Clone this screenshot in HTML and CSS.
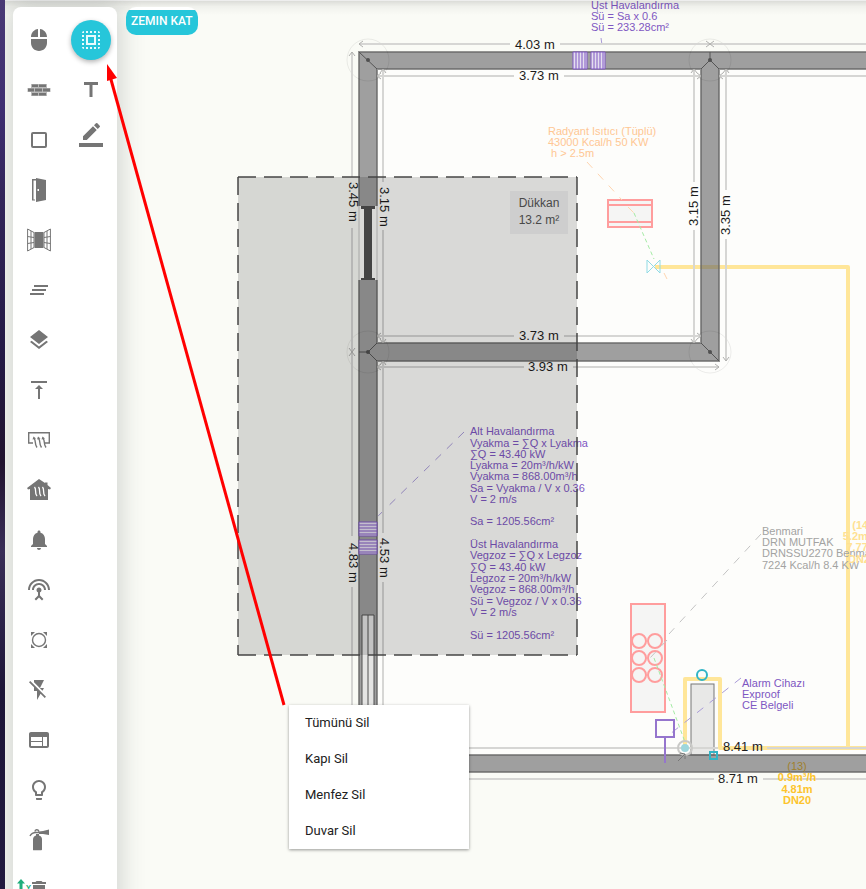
FILE: index.html
```html
<!DOCTYPE html>
<html lang="tr">
<head>
<meta charset="utf-8">
<meta name="viewport" content="width=device-width, initial-scale=1">
<title>Zemin Kat</title>
<link rel="stylesheet" href="styles.css">
</head>
<body>
<div class="app">
  <div class="backdrop"></div>
  <main class="workspace">
    <svg class="plan" role="img" aria-label="Zemin kat planı">
      <defs>
        <marker id="tip" class="tip" viewBox="0 0 8 8" refX="7" refY="4" markerWidth="8" markerHeight="8" markerUnits="userSpaceOnUse" orient="auto-start-reverse">
          <path d="M3 1 7 4 3 7"/>
        </marker>
      </defs>

      <!-- floor -->
      <path class="floor" d="M355 52H2000V772H355Z"/>

      <!-- gas pipes -->
      <g class="pipe">
        <path d="M650 267H843V748"/>
        <path d="M680 748V679H715V748H2000"/>
      </g>

      <!-- appliances -->
      <g class="appliance">
        <rect x="603" y="200" width="44" height="27"/>
        <path d="M603 205h44M603 222h44"/>
        <rect x="626" y="604" width="34" height="108"/>
        <circle cx="634" cy="641" r="7"/><circle cx="650" cy="641" r="7"/>
        <circle cx="634" cy="658" r="7"/><circle cx="650" cy="658" r="7"/>
        <circle cx="634" cy="675" r="7"/><circle cx="650" cy="675" r="7"/>
      </g>
      <path class="flex-line" d="M629 213 649 259M649 658 680 742"/>
      <path class="valve" d="M642 260V273L655 260V273Z"/>
      <path class="leader leader-orange" d="M582 162 617 200M623 207 629 213M659 273 662 279"/>
      <path class="leader leader-gray" d="M756 534 664 634M662 640 645 658"/>

      <!-- flue shaft -->
      <rect class="shaft" x="686" y="684" width="23" height="71"/>

      <!-- walls -->
      <path class="wall" d="M354 52H2000V69H714V361H372V755H2000V772H354V280H372V343H696V69H372V206H354Z"/>
      <path class="wall-edge" d="M354 206V52H2000M2000 69H714V361H372V755H2000M2000 772H354V280M372 280V343H696V69H372V206"/>
      <path class="miter" d="M354 52 372 69M696 69 705 60 714 69M705 52V60M372 343 363 352 372 361M354 352H363M696 343 714 361"/>
      <g class="node">
        <circle cx="363" cy="60" r="2"/><circle cx="705" cy="60" r="2"/>
        <circle cx="363" cy="352" r="2"/><circle cx="705" cy="352" r="2"/>
      </g>
      <g class="halo">
        <circle cx="363" cy="60" r="21"/><circle cx="705" cy="60" r="21"/>
        <circle cx="363" cy="352" r="21"/><circle cx="705" cy="352" r="21"/>
      </g>

      <!-- door and window openings -->
      <path class="door-jamb" d="M354 206V280M372 206V280"/>
      <path class="door-leaf" d="M356 206H370V209H367V278H370V280H356V278H359V209H356Z"/>
      <path class="pane" d="M357 615H369V755H357Z"/>
      <path class="mullion" d="M357 755V615H369V755M363 615V755"/>

      <!-- vents -->
      <g class="vent">
        <path class="vent-back" d="M568 52h14v17h-14zM586 52h14v17h-14zM354 522h18v14h-18zM354 540h18v14h-18z"/>
        <path d="M571 52v17M574 52v17M577 52v17M580 52v17M589 52v17M592 52v17M595 52v17M598 52v17M354 525h18M354 528h18M354 531h18M354 534h18M354 543h18M354 546h18M354 549h18M354 552h18"/>
      </g>
      <path class="leader leader-purple" d="M459 432 368 521M592 8 593 14M596 38 597 45M736 678 660 738"/>

      <!-- dimension lines -->
      <g class="dim-head">
        <path d="M505 44H354"/><path d="M555 44H705"/><path d="M866 44H705"/>
        <path d="M509 76H372"/><path d="M559 76H696"/><path d="M866 76H714"/>
        <path d="M347 177V52"/><path d="M347 228V352"/><path d="M347 536V352"/>
        <path d="M378 182V69"/><path d="M378 230V343"/><path d="M378 533V361"/>
        <path d="M689 182V69"/><path d="M689 230V343"/>
        <path d="M721 190V69"/><path d="M721 239V361"/>
        <path d="M509 336H372"/><path d="M559 336H696"/>
        <path d="M519 367H372"/><path d="M568 367H714"/>
      </g>
      <path class="dim-line" d="M347 587V779M378 582V748M378 748H713M762 748H2000M349 779H709M758 779H2000"/>
      <g class="dim-text">
        <text x="510" y="49">4.03 m</text>
        <text x="514" y="80">3.73 m</text>
        <text x="514" y="340">3.73 m</text>
        <text x="523" y="371">3.93 m</text>
        <text x="718" y="751">8.41 m</text>
        <text x="713" y="783">8.71 m</text>
        <text transform="translate(344 182) rotate(90)">3.45 m</text>
        <text transform="translate(375 187) rotate(90)">3.15 m</text>
        <text transform="translate(344 543) rotate(90)">4.83 m</text>
        <text transform="translate(375 538) rotate(90)">4.53 m</text>
        <text transform="translate(693 226) rotate(-90)">3.15 m</text>
        <text transform="translate(725 235) rotate(-90)">3.35 m</text>
      </g>

      <!-- gas detector, fittings -->
      <path class="detector" d="M651 720h18v17h-18zM660 737v26"/>
      <circle class="riser-ring" cx="680" cy="748" r="7"/>
      <circle class="riser" cx="680" cy="748" r="4"/>
      <path class="riser-arrow" d="M673 761 680 754M675 753 680 754 680 759"/>
      <circle class="fitting" cx="697" cy="675" r="5"/>
      <rect class="fitting" x="705" y="752" width="7" height="7"/>

      <!-- notes -->
      <g class="note note-purple">
        <text x="586" y="9">Üst Havalandırma</text>
        <text x="586" y="20">Sü = Sa x 0.6</text>
        <text x="586" y="31">Sü = 233.28cm²</text>
        <text x="465" y="435">Alt Havalandırma</text>
        <text x="465" y="447">Vyakma = ∑Q x Lyakma</text>
        <text x="465" y="458">∑Q = 43.40 kW</text>
        <text x="465" y="469">Lyakma = 20m³/h/kW</text>
        <text x="465" y="480">Vyakma = 868.00m³/h</text>
        <text x="465" y="492">Sa = Vyakma / V x 0.36</text>
        <text x="465" y="503">V = 2 m/s</text>
        <text x="465" y="525">Sa = 1205.56cm²</text>
        <text x="465" y="548">Üst Havalandırma</text>
        <text x="465" y="559">Vegzoz = ∑Q x Legzoz</text>
        <text x="465" y="571">∑Q = 43.40 kW</text>
        <text x="465" y="582">Legzoz = 20m³/h/kW</text>
        <text x="465" y="593">Vegzoz = 868.00m³/h</text>
        <text x="465" y="605">Sü = Vegzoz / V x 0.36</text>
        <text x="465" y="616">V = 2 m/s</text>
        <text x="465" y="639">Sü = 1205.56cm²</text>
        <text x="737" y="687">Alarm Cihazı</text>
        <text x="737" y="698">Exproof</text>
        <text x="737" y="709">CE Belgeli</text>
      </g>
      <g class="note note-orange">
        <text x="543" y="135">Radyant Isıtıcı (Tüplü)</text>
        <text x="543" y="146">43000 Kcal/h 50 KW</text>
        <text x="546" y="157">h &gt; 2.5m</text>
      </g>
      <g class="note note-gray">
        <text x="757" y="535">Benmari</text>
        <text x="757" y="546">DRN MUTFAK</text>
        <text x="757" y="557">DRNSSU2270 Benmari</text>
        <text x="757" y="569">7224 Kcal/h 8.4 KW</text>
      </g>
      <g class="note note-pale">
        <text x="857" y="529">(14)</text>
        <text x="857" y="540">5.2m³/h</text>
        <text x="857" y="551">7.77m</text>
        <text x="857" y="563">DN20</text>
      </g>
      <g class="note note-gold">
        <text class="note-shaded" x="792" y="770">(13)</text>
        <text x="792" y="781">0.9m³/h</text>
        <text x="792" y="793">4.81m</text>
        <text x="792" y="804">DN20</text>
      </g>

      <!-- selection marquee -->
      <path class="marquee" d="M233 177H572V655H233Z"/>
      <path class="marquee-edge" d="M233 177H572M233 655H572"/>
      <path class="marquee-edge" d="M233 177V655M572 177V655"/>

      <!-- room tag -->
      <rect class="tag" x="505" y="191" width="58" height="43"/>
      <g class="tag-text">
        <text x="534" y="207">Dükkan</text>
        <text x="534" y="224">13.2 m²</text>
      </g>
    </svg>

    <div class="overlay">
      <div class="toolbar" role="toolbar" aria-label="Çizim araçları">
        <div class="tools">
          <button class="tool" aria-label="Seç"><svg viewBox="0 0 24 24"><path d="M13 1.070V9h7c0-4.080-3.050-7.440-7-7.930zM4 15c0 4.420 3.580 8 8 8s8-3.580 8-8v-4H4v4zm7-13.930C7.050 1.560 4 4.920 4 9h7V1.070z"/></svg></button>
          <button class="tool" aria-label="Duvar"><svg viewBox="0 0 24 24"><path opacity=".5" d="M4 6h16v4h3.500v4H20v4H4v-4H.5v-4H4z"/><path d="M5 6.500h6v2.500H5zM12 6.500h7v2.500h-7zM1 10.500h6v3H1zM8 10.500h7v3H8zM16 10.500h7v3h-7zM5 15h6v2.500H5zM12 15h7v2.500h-7z"/></svg></button>
          <button class="tool" aria-label="Oda"><svg viewBox="0 0 24 24"><rect class="line heavy" x="5" y="5" width="14" height="14" rx="1"/></svg></button>
          <button class="tool" aria-label="Kapı"><svg viewBox="0 0 24 24"><path fill-rule="evenodd" d="M9 0l10 2v20L9 24zM10.500 11v2h1.500v-2zM5 1h4v1.500H6.500V21.500H8V22.500H5z"/></svg></button>
          <button class="tool" aria-label="Pencere"><svg viewBox="0 0 24 24"><path d="M7.500 4h9v16h-9z"/><path class="line" d="M.6 1 7 4.500V19.500L.6 23zM23.400 1 17 4.500V19.500L23.400 23zM4 3V21M20 3V21M.6 8.500 7 9.500M.6 15.500 7 14.500M23.400 8.500 17 9.500M23.400 15.500 17 14.500"/></svg></button>
          <button class="tool" aria-label="Hatlar"><svg viewBox="0 0 24 24"><path d="M5 13h14v-2H5v2zm-2 4h14v-2H3v2zM7 7v2h14V7H7z"/></svg></button>
          <button class="tool" aria-label="Katmanlar"><svg viewBox="0 0 24 24"><path d="M11.990 18.540l-7.370-5.730L3 14.070l9 7 9-7-1.630-1.270-7.380 5.740zM12 16l7.360-5.730L21 9l-9-7-9 7 1.630 1.270L12 16z"/></svg></button>
          <button class="tool" aria-label="Üste hizala"><svg viewBox="0 0 24 24"><path d="M8 11h3v10h2V11h3l-4-4-4 4zM4 3v2h16V3H4z"/></svg></button>
          <button class="tool" aria-label="Menfez"><svg viewBox="0 0 24 24"><path class="line bold" d="M6 15H1.700V4.700H22.300V15H18"/><path class="line bold" d="M7 10.500c2.500 2.500 0 5 3 9M11.500 10.500c2.500 2.500 0 5 3 9M16 10.500c2.500 2.500 0 5 3 9"/><path d="M5.500 11.500 6.500 8.500l2.500 2zM10 11.500l1-3 2.500 2zM14.500 11.500l1-3 2.500 2z"/></svg></button>
          <button class="tool" aria-label="Isıtma"><svg viewBox="0 0 24 24"><path d="M12 1l6 4V4.500h2.500V7L24 10l-1 1.500-2-.5v11H3V11l-2 .5L0 10z"/><path class="cut" d="M7.500 9c2.500 3-.5 5 2.500 9M11.500 9c2.500 3-.5 5 2.500 9M15.500 9c2.500 3-.5 5 2.500 9"/></svg></button>
          <button class="tool" aria-label="Alarm"><svg viewBox="0 0 24 24"><path d="M12 22c1.100 0 2-.9 2-2h-4c0 1.100.89 2 2 2zm6-6v-5c0-3.070-1.640-5.640-4.500-6.320V4c0-.83-.67-1.500-1.500-1.500s-1.500.67-1.500 1.500v.68C7.630 5.360 6 7.920 6 11v5l-2 2v1h16v-1l-2-2z"/></svg></button>
          <button class="tool" aria-label="Sensör"><svg viewBox="0 0 24 24"><path d="M12 5c-3.870 0-7 3.130-7 7h2c0-2.760 2.240-5 5-5s5 2.240 5 5h2c0-3.870-3.130-7-7-7zm1 9.290c.88-.39 1.500-1.260 1.500-2.290 0-1.380-1.120-2.500-2.500-2.500S9.500 10.620 9.500 12c0 1.020.62 1.900 1.500 2.290v3.300L7.590 21 9 22.410l3-3 3 3L16.410 21 13 17.590v-3.300zM12 1C5.930 1 1 5.930 1 12h2c0-4.970 4.030-9 9-9s9 4.030 9 9h2c0-6.070-4.930-11-11-11z"/></svg></button>
          <button class="tool" aria-label="Kolon"><svg viewBox="0 0 24 24"><circle class="line bold" cx="12" cy="12" r="6.500"/><path d="M4 4h4L4 8zM20 4v4L16 4zM4 20v-4L8 20zM20 20h-4l4-4z"/></svg></button>
          <button class="tool" aria-label="Elektrik"><svg viewBox="0 0 24 24"><path d="M3.270 3L2 4.270l5 5V13h3v9l3.580-6.140L17.730 20 19 18.730 3.270 3zM17 10h-4l4-8H7v2.180l8.460 8.460L17 10z"/></svg></button>
          <button class="tool" aria-label="Pafta"><svg viewBox="0 0 24 24"><path fill-rule="evenodd" d="M20 4H4c-1.100 0-2 .9-2 2v12c0 1.100.9 2 2 2h16c1.100 0 2-.9 2-2V6c0-1.100-.9-2-2-2zM15 18H4v-4h11zM15 13H4V9h11zM20 18h-4V9h4z"/></svg></button>
          <button class="tool" aria-label="Aydınlatma"><svg viewBox="0 0 24 24"><path d="M9 21c0 .55.45 1 1 1h4c.55 0 1-.45 1-1v-1H9v1zm3-19C8.140 2 5 5.140 5 9c0 2.380 1.190 4.470 3 5.740V17c0 .55.45 1 1 1h6c.55 0 1-.45 1-1v-2.260c1.810-1.270 3-3.360 3-5.740 0-3.860-3.140-7-7-7zm2.850 11.100l-.85.6V16h-4v-2.300l-.85-.6C7.800 12.160 7 10.630 7 9c0-2.760 2.240-5 5-5s5 2.240 5 5c0 1.630-.8 3.160-2.150 4.100z"/></svg></button>
          <button class="tool" aria-label="Yangın söndürücü"><svg viewBox="0 0 24 24"><path d="M6 22V11.500C6 9 7.500 8 9 7.500V6h3v1.500c2 .5 3 2 3 4V21.500c0 .5-.3.800-.8.800H6.800c-.5 0-.8-.3-.8-.3zM12 3.500 16 3l6-1.500v5.500L16 6H12z"/><path class="line bold" d="M3 8c1-2 3-3.500 6-3.500h3M8 3.500c0-2 3-2.500 4 0"/></svg></button>
          <button class="tool" aria-label="Sil"><svg viewBox="0 0 24 24"><path d="M6 19c0 1.100.9 2 2 2h8c1.100 0 2-.9 2-2V7H6v12zM19 4h-3.500l-1-1h-5l-1 1H5v2h14V4z"/></svg></button>
        </div>
        <div class="tools">
          <button class="tool tool-active" aria-label="Alan seç" aria-pressed="true"><svg viewBox="0 0 24 24"><path d="M3 5h2V3c-1.100 0-2 .9-2 2zm0 8h2v-2H3v2zm4 8h2v-2H7v2zM3 9h2V7H3v2zm10-6h-2v2h2V3zm6 0v2h2c0-1.100-.9-2-2-2zM5 21v-2H3c0 1.100.9 2 2 2zm-2-4h2v-2H3v2zM9 3H7v2h2V3zm2 18h2v-2h-2v2zm8-8h2v-2h-2v2zm0 8c1.100 0 2-.9 2-2h-2v2zm0-12h2V7h-2v2zm0 8h2v-2h-2v2zm-4 4h2v-2h-2v2zm0-16h2V3h-2v2zM7 17h10V7H7v10zm2-8h6v6H9V9z"/></svg></button>
          <button class="tool" aria-label="Metin"><svg viewBox="0 0 24 24"><path d="M5 4v3h5.500v12h3V7H19V4z"/></svg></button>
          <button class="tool" aria-label="Çizgi rengi"><svg viewBox="0 0 24 24"><path d="M17.750 2 14 -1.750l-10 10V12h3.750l10-10zm2.960-2.960a1 1 0 0 0 0-1.410L18.370-4.710a1 1 0 0 0-1.410 0L15-2.750 18.750 1l1.960-1.960zM0 15h24v4H0z"/></svg></button>
        </div>
      </div>
      <div class="floor-badge">ZEMIN KAT</div>
    </div>

    <svg class="axis" viewBox="0 0 20 10" aria-hidden="true">
      <path d="M0 4.500 4 0l4 4.500H5.500V10h-3V4.500z"/>
      <text x="9" y="11">Y</text>
    </svg>

    <svg class="callout" aria-hidden="true">
      <path class="callout-line" d="M279 705 105 76"/>
      <path class="callout-head" d="M102 64 112 78 102 81Z"/>
    </svg>

    <div class="menu" role="menu">
      <button class="menu-item" role="menuitem">Tümünü Sil</button>
      <button class="menu-item" role="menuitem">Kapı Sil</button>
      <button class="menu-item" role="menuitem">Menfez Sil</button>
      <button class="menu-item" role="menuitem">Duvar Sil</button>
    </div>
  </main>
</div>
</body>
</html>
```
FILE: styles.css
```css
* { box-sizing: border-box; }

body {
  margin: 0;
  font-family: Roboto, "Liberation Sans", sans-serif;
  overflow: hidden;
}

button {
  border: 0;
  padding: 0;
  background: none;
  font: inherit;
  color: inherit;
  cursor: pointer;
}

.app {
  display: grid;
  grid-template-columns: 5px 1fr;
  height: 100vh;
}

.backdrop {
  background: linear-gradient(#4a3a75 0%, #3f2f72 12%, #33265a 22%, #241a45 40%, #22142f 52%, #3a2f58 62%, #1d1638 78%, #221a3f 100%);
}

.workspace {
  position: relative;
  overflow: hidden;
  background: #fafbf6;
}

.workspace::after {
  content: "";
  position: absolute;
  inset: 0 0 auto;
  height: 14px;
  border-top: 1px solid #eeeeee;
  background: linear-gradient(rgba(0, 0, 0, 0.12), rgba(0, 0, 0, 0.04) 40%, transparent);
  pointer-events: none;
}

/* drawing */
.plan,
.callout {
  position: absolute;
  inset: 0;
  width: 100%;
  height: 100%;
  font-family: "Liberation Sans", Arial, sans-serif;
}

.callout { pointer-events: none; z-index: 3; }

.floor { fill: #fdfdfb; }

.pipe { fill: none; stroke: #ffe699; stroke-width: 4; stroke-linejoin: round; }

.appliance { fill: #f5f5f4; stroke: #ff9d9d; stroke-width: 2; }
.appliance circle { fill: none; }

.flex-line { fill: none; stroke: #a5eba5; stroke-dasharray: 4 3; }
.valve { fill: none; stroke: #8fdbe5; stroke-width: 1; }

.leader { fill: none; stroke-width: 1; stroke-dasharray: 8 8; }
.leader-orange { stroke: #ffd5b0; }
.leader-gray { stroke: #c4c4c4; }
.leader-purple { stroke: #a99bd8; }

.shaft { fill: #e8e8e7; stroke: #777777; stroke-width: 1; }

.wall { fill: #666666; fill-opacity: 0.62; }
.wall-edge { fill: none; stroke: #666666; stroke-width: 2; stroke-opacity: 0.7; }
.miter { fill: none; stroke: #555555; stroke-width: 1; }
.node { fill: #505050; }
.halo { fill: none; stroke: #000000; stroke-opacity: 0.07; }

.door-jamb { stroke: #c4c4c4; }
.door-leaf { fill: #505050; }
.pane { fill: #e4e4e3; }
.mullion { fill: none; stroke: #505050; stroke-width: 1; }

.vent { fill: none; stroke: #7e57c2; stroke-width: 1; }
.vent-back { fill: #e4deef; }

.dim-line,
.dim-head { fill: none; stroke: #d6d6d4; stroke-width: 2; }
.dim-head path { marker-end: url(#tip); }
.tip { fill: none; stroke: #b0b0ae; stroke-width: 1; }
.dim-text { font-size: 13px; fill: #1c1c1c; }

.detector { fill: none; stroke: #9575cd; stroke-width: 2; }
.riser-ring { fill: none; stroke: #c9c9c7; stroke-width: 2; }
.riser { fill: #9ed6dc; }
.riser-arrow { fill: none; stroke: #777777; stroke-width: 1; }
.fitting { fill: none; stroke: #30b4c6; stroke-width: 2; }

.note { font-size: 11px; }
.note-purple { fill: #7e57c2; }
.note-orange { fill: #ffc794; }
.note-gray { fill: #a3a3a2; }
.note-pale { fill: #ffe192; text-anchor: middle; font-weight: bold; }
.note-gold { fill: #fdc42c; text-anchor: middle; font-weight: bold; }
.note-shaded { fill: #a07f2c; font-weight: normal; }

.marquee { fill: #000000; fill-opacity: 0.14; }
.marquee-edge { fill: none; stroke: #444444; stroke-width: 2; stroke-opacity: 0.75; stroke-dasharray: 18 8; }

.tag { fill: #cecece; }
.tag-text { font-size: 12px; fill: #484848; text-anchor: middle; }

/* tools */
.overlay {
  position: relative;
  z-index: 1;
  display: flex;
  align-items: flex-start;
  gap: 9px;
  padding: 7px 8px 0;
}

.toolbar {
  display: flex;
  padding: 13px 6px;
  gap: 12px;
  border-radius: 8px;
  background: #ffffff;
  box-shadow: 0 0 24px 4px rgba(50, 60, 60, 0.2);
}

.tools {
  display: flex;
  flex-direction: column;
  gap: 10px;
}

.tool {
  display: flex;
  flex: none;
  align-items: center;
  justify-content: center;
  width: 40px;
  height: 40px;
  border-radius: 50%;
  color: #757575;
}

.tool svg {
  width: 24px;
  height: 24px;
  fill: currentColor;
  overflow: visible;
}

.tool .line { fill: none; stroke: currentColor; stroke-width: 1; }
.tool .bold { stroke-width: 1.4; }
.tool .heavy { stroke-width: 2; }
.tool .cut { fill: none; stroke: #ffffff; stroke-width: 1.3; }

.tool-active {
  background: #26c6da;
  color: #e9fbfd;
  box-shadow: 0 2px 5px rgba(0, 0, 0, 0.3);
}

.floor-badge {
  padding: 0 5px;
  border-radius: 10px;
  background: linear-gradient(#ffffff 3px, #26c6da 3px);
  color: #ffffff;
  font-size: 12px;
  font-weight: 500;
  line-height: 28px;
}

.axis {
  position: absolute;
  z-index: 2;
  left: 12px;
  bottom: 0;
  width: 20px;
  height: 10px;
  fill: #1fae7c;
  font-size: 8px;
  font-weight: bold;
}

/* context menu */
.menu {
  position: absolute;
  z-index: 4;
  left: 284px;
  top: 705px;
  width: 180px;
  display: flex;
  flex-direction: column;
  background: #ffffff;
  box-shadow: 0 1px 3px rgba(0, 0, 0, 0.4);
}

.menu-item {
  padding: 0 16px;
  text-align: left;
  font-size: 13px;
  line-height: 36px;
  color: #212121;
}

.callout-line { stroke: #ff0000; stroke-width: 3; fill: none; }
.callout-head { fill: #ff0000; }
```
